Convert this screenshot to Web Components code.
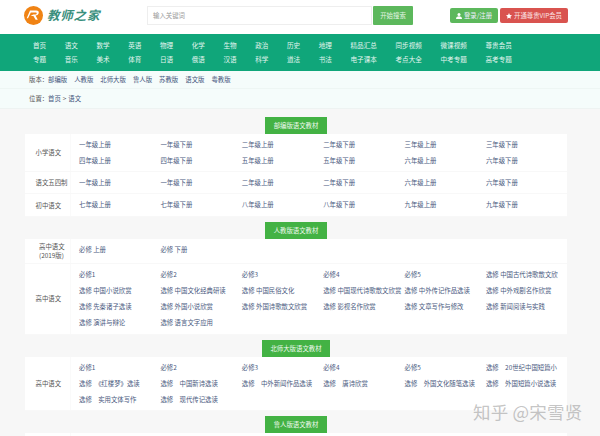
<!DOCTYPE html>
<html lang="zh">
<head>
<meta charset="utf-8">
<title>语文教材</title>
<style>
    html, body {
        margin: 0;
        padding: 0;
        height: 436px;
        overflow: hidden;
        background: #f7f7f7;
        font-family: "Noto Sans CJK SC", "Noto Sans", sans-serif;
        font-size: 6.4px;
    }
</style>
</head>
<body>

<site-header></site-header>
<site-nav></site-nav>
<version-bar></version-bar>
<crumb-bar></crumb-bar>

<book-area>
    <section-title>部编版语文教材</section-title>
    <book-card>
        <book-row label="小学语文" links="一年级上册,一年级下册,二年级上册,二年级下册,三年级上册,三年级下册,四年级上册,四年级下册,五年级上册,五年级下册,六年级上册,六年级下册"></book-row>
        <book-row label="语文五四制" links="一年级上册,一年级下册,二年级上册,二年级下册,六年级上册,六年级下册"></book-row>
        <book-row label="初中语文" links="七年级上册,七年级下册,八年级上册,八年级下册,九年级上册,九年级下册"></book-row>
    </book-card>

    <section-title>人教版语文教材</section-title>
    <book-card>
        <book-row wide label="高中语文<br>(2019版)" links="必修 上册,必修 下册"></book-row>
        <book-row label="高中语文" links="必修1,必修2,必修3,必修4,必修5,选修 中国古代诗歌散文欣,选修 中国小说欣赏,选修 中国文化经典研读,选修 中国民俗文化,选修 中国现代诗歌散文欣赏,选修 中外传记作品选读,选修 中外戏剧名作欣赏,选修 先秦诸子选读,选修 外国小说欣赏,选修 外国诗歌散文欣赏,选修 影视名作欣赏,选修 文章写作与修改,选修 新闻阅读与实践,选修 演讲与辩论,选修 语言文字应用"></book-row>
    </book-card>

    <section-title>北师大版语文教材</section-title>
    <book-card>
        <book-row label="高中语文" links="必修1,必修2,必修3,必修4,必修5,选修　20世纪中国短篇小,选修　《红楼梦》选读,选修　中国新诗选读,选修　中外新闻作品选读,选修　唐诗欣赏,选修　外国文化随笔选读,选修　外国短篇小说选读,选修　实用文体写作,选修　现代传记选读"></book-row>
    </book-card>

    <section-title>鲁人版语文教材</section-title>
    <book-card>
        <book-row label="" links=""></book-row>
    </book-card>
</book-area>

<zhihu-mark>知乎 @宋雪贤</zhihu-mark>

<script>
class SiteHeader extends HTMLElement {
    constructor() {
        super();
        this.attachShadow({mode: 'open'});
        this.shadowRoot.innerHTML = `
            <style>
                :host {
                    display: flex;
                    align-items: center;
                    height: 34px;
                    padding: 0 0 3px 24px;
                    box-sizing: border-box;
                    background: #fff;
                }
                #logo {
                    display: flex;
                    align-items: center;
                    width: 123px;
                    gap: 4px;
                }
                #brand {
                    font-size: 12.5px;
                    font-weight: 700;
                    font-style: italic;
                    letter-spacing: 0.8px;
                    color: #3a8f7d;
                    line-height: 1;
                }
                #search {
                    display: flex;
                    align-items: stretch;
                    height: 19px;
                    gap: 1px;
                }
                #input {
                    width: 225px;
                    box-sizing: border-box;
                    border: 1px solid #eee;
                    background: #fff;
                    color: #999;
                    padding-left: 5px;
                    line-height: 17px;
                }
                #go {
                    width: 40px;
                    background: #5cb85c;
                    color: #e4f4e4;
                    text-align: center;
                    line-height: 19px;
                    border-radius: 1px;
                }
                #actions {
                    display: flex;
                    gap: 2px;
                    margin-left: 37px;
                }
                .btn {
                    display: flex;
                    align-items: center;
                    justify-content: center;
                    gap: 2px;
                    height: 15px;
                    color: #eef;
                    border-radius: 2px;
                }
                #login { width: 48px; background: #5cb85c; }
                #vip { width: 68px; background: #d9534f; color: #fbe6e6; }
                svg { display: block; }
            </style>
            <div id="logo">
                <svg width="19" height="19" viewBox="0 0 19 19">
                    <circle cx="9.5" cy="9.5" r="9.5" fill="#f08314"/>
                    <path d="M6 4.6h6.2c2.2 0 3 1.3 2.4 2.9-.5 1.2-1.6 1.9-3 2.1l2.2 4.2h-2.2L9.4 9.9 6.6 10l2.6-1.5h1.9c1 0 1.5-.4 1.6-1 .1-.6-.3-1-1.2-1H6.8L4 12.2H2.7L6 4.6z" fill="#fff"/>
                </svg>
                <span id="brand">教师之家</span>
            </div>
            <div id="search">
                <div id="input">输入关键词</div>
                <div id="go">开始搜索</div>
            </div>
            <div id="actions">
                <div class="btn" id="login">
                    <svg width="6" height="6" viewBox="0 0 6 6"><circle cx="3" cy="1.6" r="1.5" fill="#fff"/><path d="M0 6c0-1.9 1.2-2.8 3-2.8S6 4.1 6 6z" fill="#fff"/></svg>
                    <span>登录/注册</span>
                </div>
                <div class="btn" id="vip">
                    <svg width="6" height="6" viewBox="0 0 10 10"><path d="M5 0l1.5 3.3 3.5.4-2.6 2.4.7 3.6L5 7.9 1.9 9.7l.7-3.6L0 3.7l3.5-.4z" fill="#fff"/></svg>
                    <span>开通尊贵VIP会员</span>
                </div>
            </div>
        `;
    }
}

class SiteNav extends HTMLElement {
    constructor() {
        super();
        const row1 = ['首页','语文','数学','英语','物理','化学','生物','政治','历史','地理','精品汇总','同步视频','微课视频','尊贵会员'];
        const row2 = ['专题','音乐','美术','体育','日语','俄语','汉语','科学','道法','书法','电子课本','考点大全','中考专题','高考专题'];
        this.attachShadow({mode: 'open'});
        this.shadowRoot.innerHTML = `
            <style>
                :host {
                    display: grid;
                    grid-template-columns: repeat(10, 31.75px) 45px 45px 45px 45px;
                    grid-auto-rows: 14px;
                    align-content: center;
                    height: 37px;
                    padding: 0 0 1px 33px;
                    box-sizing: border-box;
                    background: #10a67a;
                    color: #e3f5ef;
                    font-size: 6.6px;
                }
                span { line-height: 14px; white-space: nowrap; }
            </style>
            ${row1.concat(row2).map(t => `<span>${t}</span>`).join('')}
        `;
    }
}

class VersionBar extends HTMLElement {
    constructor() {
        super();
        const list = ['部编版','人教版','北师大版','鲁人版','苏教版','语文版','粤教版'];
        this.attachShadow({mode: 'open'});
        this.shadowRoot.innerHTML = `
            <style>
                :host {
                    display: flex;
                    align-items: center;
                    height: 18px;
                    padding-left: 29px;
                    box-sizing: border-box;
                    background: #f5fcfb;
                    border-bottom: 1px solid #eef6f4;
                    color: #555;
                    white-space: nowrap;
                }
                a { color: #44557c; margin-right: 7px; }
                b { font-weight: 400; flex: none; width: 19px; }
            </style>
            <b>版本：</b>${list.map(t => `<a>${t}</a>`).join('')}
        `;
    }
}

class CrumbBar extends HTMLElement {
    constructor() {
        super();
        this.attachShadow({mode: 'open'});
        this.shadowRoot.innerHTML = `
            <style>
                :host {
                    display: flex;
                    align-items: center;
                    height: 20px;
                    padding-left: 29px;
                    box-sizing: border-box;
                    background: #f5fcfb;
                    border-bottom: 1px solid #eef3f2;
                    color: #555;
                    white-space: nowrap;
                }
                b { font-weight: 400; flex: none; width: 19px; }
                a { color: #44557c; }
                i { font-style: normal; margin: 0 2px; }
            </style>
            <b>位置：</b><a>首页</a><i>&gt;</i><a>语文</a>
        `;
    }
}

class BookArea extends HTMLElement {
    constructor() {
        super();
        this.attachShadow({mode: 'open'});
        this.shadowRoot.innerHTML = `
            <style>
                :host {
                    display: flex;
                    flex-direction: column;
                    align-items: center;
                    width: 542px;
                    margin-left: 25px;
                    padding-top: 8px;
                }
            </style>
            <slot></slot>
        `;
    }
}

class SectionTitle extends HTMLElement {
    constructor() {
        super();
        this.attachShadow({mode: 'open'});
        this.shadowRoot.innerHTML = `
            <style>
                :host {
                    display: block;
                    height: 17px;
                    padding: 0 8.5px;
                    background: #43b244;
                    color: #eef8ee;
                    line-height: 17px;
                    white-space: nowrap;
                }
            </style>
            <slot></slot>
        `;
    }
}

class BookCard extends HTMLElement {
    constructor() {
        super();
        this.attachShadow({mode: 'open'});
        this.shadowRoot.innerHTML = `
            <style>
                :host {
                    display: block;
                    align-self: stretch;
                    background: #fff;
                    margin-bottom: 5px;
                }
            </style>
            <slot></slot>
        `;
    }
}

class BookRow extends HTMLElement {
    static get observedAttributes() { return ['label','links']; }

    constructor() {
        super();
        const template = document.createElement('template');
        template.innerHTML = `
            <style>
                :host {
                    display: flex;
                    border-bottom: 1px solid #f8f8f8;
                    box-sizing: border-box;
                }
                :host([wide]) { height: 25px; }
                #label {
                    flex: 0 0 46px;
                    box-sizing: border-box;
                    display: flex;
                    align-items: center;
                    padding-left: 10.5px;
                    border-right: 1px solid #fafafa;
                    color: #555;
                    line-height: 9px;
                }
                :host([wide]) #label { padding-left: 14px; }
                #links {
                    flex: 1;
                    display: grid;
                    grid-template-columns: repeat(6, 81.4px);
                    grid-auto-rows: 16.3px;
                    padding: 3px 0 1.8px 8px;
                }
                a {
                    display: block;
                    white-space: nowrap;
                    line-height: 16.3px;
                    color: #4a5a80;
                }
            </style>
            <div id="label"></div>
            <div id="links"></div>
        `;
        this.attachShadow({mode: 'open'});
        this.shadowRoot.appendChild(template.content.cloneNode(true));
    }

    attributeChangedCallback(name, oldValue, newValue) {
        switch (name) {
            case 'label':
                this.shadowRoot.querySelector('#label').innerHTML = `<span>${newValue}</span>`;
                break;
            case 'links':
                this.shadowRoot.querySelector('#links').innerHTML =
                    newValue.split(',').filter(t => t).map(t => `<a>${t}</a>`).join('');
                break;
        }
    }
}

class ZhihuMark extends HTMLElement {
    constructor() {
        super();
        this.attachShadow({mode: 'open'});
        this.shadowRoot.innerHTML = `
            <style>
                :host {
                    position: absolute;
                    left: 473px;
                    top: 401px;
                    font-size: 17.5px;
                    line-height: 22px;
                    letter-spacing: 0.2px;
                    white-space: nowrap;
                    color: rgba(160, 160, 160, 0.62);
                }
            </style>
            <slot></slot>
        `;
    }
}

customElements.define('site-header', SiteHeader);
customElements.define('site-nav', SiteNav);
customElements.define('version-bar', VersionBar);
customElements.define('crumb-bar', CrumbBar);
customElements.define('book-area', BookArea);
customElements.define('section-title', SectionTitle);
customElements.define('book-card', BookCard);
customElements.define('book-row', BookRow);
customElements.define('zhihu-mark', ZhihuMark);
</script>
</body>
</html>
